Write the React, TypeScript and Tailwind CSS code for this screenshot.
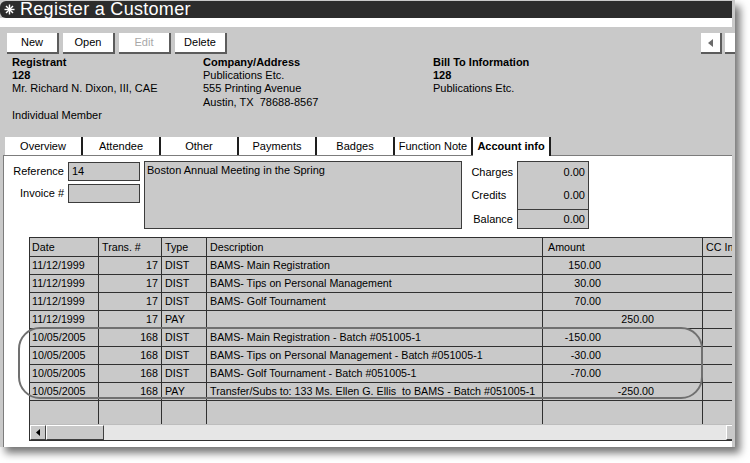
import React from "react";

const rows = [
  { date: "11/12/1999", no: "17", type: "DIST", desc: "BAMS- Main Registration", debit: "150.00", credit: "" },
  { date: "11/12/1999", no: "17", type: "DIST", desc: "BAMS- Tips on Personal Management", debit: "30.00", credit: "" },
  { date: "11/12/1999", no: "17", type: "DIST", desc: "BAMS- Golf Tournament", debit: "70.00", credit: "" },
  { date: "11/12/1999", no: "17", type: "PAY", desc: "", debit: "", credit: "250.00" },
  { date: "10/05/2005", no: "168", type: "DIST", desc: "BAMS- Main Registration - Batch #051005-1", debit: "-150.00", credit: "" },
  { date: "10/05/2005", no: "168", type: "DIST", desc: "BAMS- Tips on Personal Management - Batch #051005-1", debit: "-30.00", credit: "" },
  { date: "10/05/2005", no: "168", type: "DIST", desc: "BAMS- Golf Tournament - Batch #051005-1", debit: "-70.00", credit: "" },
  { date: "10/05/2005", no: "168", type: "PAY", desc: "Transfer/Subs to: 133 Ms. Ellen G. Ellis  to BAMS - Batch #051005-1", debit: "", credit: "-250.00" },
];

const tabs = ["Overview", "Attendee", "Other", "Payments", "Badges", "Function Note", "Account info"];

const cols = "grid grid-cols-[69px_63px_45px_336px_160px_39px]";
const cell = "border-r border-b border-[#303030] flex items-center overflow-hidden whitespace-pre";

function Button({ label, disabled }: { label: string; disabled?: boolean }) {
  return (
    <div
      className={`w-[52px] h-[21px] bg-white border-r-2 border-b-2 border-[#5c5c5c] flex items-center justify-center ${
        disabled ? "text-[#a8a8a8]" : "text-black"
      }`}
    >
      {label}
    </div>
  );
}

export default function App() {
  return (
    <div className="relative w-[750px] h-[463px] bg-white overflow-hidden font-['Liberation_Sans',Arial,sans-serif] text-[11px] text-black">
      <div className="w-[735px] h-[447px] bg-[#c9c9c9] pr-[3px] shadow-[5px_6px_8px_rgba(0,0,0,0.55)] flex flex-col overflow-hidden">
        {/* title */}
        <div className="mt-[1px] h-[17px] bg-[#2c2c2c] rounded-l-[6px] flex items-center pl-[4px] gap-[5px]">
          <svg width="11" height="11" viewBox="0 0 11 11" stroke="white" strokeWidth="1.4">
            <line x1="5.5" y1="0.5" x2="5.5" y2="10.5" />
            <line x1="0.5" y1="5.5" x2="10.5" y2="5.5" />
            <line x1="2" y1="2" x2="9" y2="9" />
            <line x1="9" y1="2" x2="2" y2="9" />
          </svg>
          <span className="text-white text-[18px] leading-[17px] tracking-[0.3px]">Register a Customer</span>
        </div>
        <div className="h-[9px] bg-white" />

        {/* toolbar */}
        <div className="flex items-start justify-between pt-[6px] pl-[7px]">
          <div className="flex gap-[4px]">
            <Button label="New" />
            <Button label="Open" />
            <Button label="Edit" disabled />
            <Button label="Delete" />
          </div>
          <div className="flex gap-[3px] mr-[-14px]">
            <div className="w-[21px] h-[21px] bg-white border-r-2 border-b-2 border-[#5c5c5c] flex items-center justify-center">
              <svg width="5" height="8" viewBox="0 0 5 8">
                <polygon points="5,0 0,4 5,8" fill="#6a6a6a" />
              </svg>
            </div>
            <div className="w-[21px] h-[21px] bg-white border-r-2 border-b-2 border-[#5c5c5c]" />
          </div>
        </div>

        {/* header info */}
        <div className="mt-[2px] pl-[12px] flex leading-[13.2px]">
          <div className="w-[191px]">
            <div className="font-bold">Registrant</div>
            <div className="font-bold">128</div>
            <div>Mr. Richard N. Dixon, III, CAE</div>
            <div>&nbsp;</div>
            <div>Individual Member</div>
          </div>
          <div className="w-[230px]">
            <div className="font-bold">Company/Address</div>
            <div>Publications Etc.</div>
            <div>555 Printing Avenue</div>
            <div className="whitespace-pre">Austin, TX  78688-8567</div>
          </div>
          <div>
            <div className="font-bold">Bill To Information</div>
            <div className="font-bold">128</div>
            <div>Publications Etc.</div>
          </div>
        </div>

        {/* tabs */}
        <div className="mt-[15px] pl-[5px] flex items-end">
          {tabs.map((t) => {
            const active = t === "Account info";
            return (
              <div
                key={t}
                className={`w-[78px] bg-white border-r-2 border-[#1e1e1e] flex items-center justify-center ${
                  active ? "h-[19px] -mb-px relative z-10 font-bold pb-px" : "h-[18px]"
                }`}
              >
                {t}
              </div>
            );
          })}
        </div>

        {/* panel */}
        <div className="ml-[3px] flex-1 bg-white border-l border-t border-[#7c7c7c] overflow-hidden flex flex-col">
          <div className="flex pt-[5px] pl-[5px]">
            <div className="flex flex-col gap-[3px] pt-px">
              <div className="flex items-center">
                <span className="w-[59px] text-right pr-[4px]">Reference</span>
                <div className="w-[72px] h-[19px] bg-[#c9c9c9] border border-[#3c3c3c] flex items-center pl-[3px]">14</div>
              </div>
              <div className="flex items-center">
                <span className="w-[59px] text-right pr-[4px]">Invoice #</span>
                <div className="w-[72px] h-[19px] bg-[#c9c9c9] border border-[#3c3c3c]" />
              </div>
            </div>
            <div className="ml-[4px] w-[318px] h-[68px] bg-[#c9c9c9] border border-[#3c3c3c] pl-[2px] pt-[2px] leading-[13px]">
              Boston Annual Meeting in the Spring
            </div>
            <div className="ml-[4px] w-[47px] flex flex-col items-end">
              <div className="h-[48px] flex flex-col">
                <div className="h-[20px] mt-px flex items-center">Charges</div>
                <div className="h-[20px] mt-[3px] flex items-center">Credits</div>
              </div>
              <div className="h-[20px] flex items-center">Balance</div>
            </div>
            <div className="ml-[4px] w-[72px] h-[68px] bg-[#c9c9c9] border border-[#3c3c3c] flex flex-col">
              <div className="h-[47px] flex flex-col items-end pr-[3px]">
                <div className="h-[20px] flex items-center">0.00</div>
                <div className="h-[20px] mt-[3px] flex items-center">0.00</div>
              </div>
              <div className="flex-1 border-t border-[#3c3c3c] flex items-center justify-end pr-[3px]">0.00</div>
            </div>
          </div>

          {/* grid */}
          <div className="mt-[8px] ml-[25px] w-[713px] border-l border-t border-b border-[#303030] bg-[#c9c9c9] text-[10.7px]">
            <div className={cols}>
              <div className={`${cell} h-[19px] pl-[2px]`}>Date</div>
              <div className={`${cell} h-[19px] pl-[3px]`}>Trans. #</div>
              <div className={`${cell} h-[19px] pl-[3px]`}>Type</div>
              <div className={`${cell} h-[19px] pl-[3px]`}>Description</div>
              <div className={`${cell} h-[19px] pl-[5px]`}>Amount</div>
              <div className={`${cell} h-[19px] pl-[3px]`}>CC Info</div>
            </div>
            {rows.map((r, i) => (
              <div key={i} className={cols}>
                <div className={`${cell} h-[18px] pl-[2px]`}>{r.date}</div>
                <div className={`${cell} h-[18px] justify-end pr-[3px]`}>{r.no}</div>
                <div className={`${cell} h-[18px] pl-[3px]`}>{r.type}</div>
                <div className={`${cell} h-[18px] pl-[3px]`}>{r.desc}</div>
                <div className={`${cell} h-[18px]`}>
                  <span className="w-[58px] text-right">{r.debit}</span>
                  <span className="w-[53px] text-right">{r.credit}</span>
                </div>
                <div className={`${cell} h-[18px]`} />
              </div>
            ))}
            <div className={cols}>
              {[0, 1, 2, 3, 4, 5].map((k) => (
                <div key={k} className="h-[23px] border-r border-[#303030]" />
              ))}
            </div>
            {/* horizontal scrollbar */}
            <div className="h-[16px] flex bg-[#e6e6e6] border-t border-[#bdbdbd]">
              <div className="w-[16px] h-[15px] bg-[#c9c9c9] border-t border-l border-white border-r border-b border-r-[#404040] border-b-[#404040] flex items-center justify-center">
                <svg width="4" height="7" viewBox="0 0 4 7">
                  <polygon points="4,0 0,3.5 4,7" fill="black" />
                </svg>
              </div>
              <div className="w-[58px] h-[15px] bg-[#c9c9c9] border-t border-l border-white border-r border-b border-r-[#404040] border-b-[#404040]" />
              <div className="flex-1" />
              <div className="w-[16px] h-[15px] bg-[#c9c9c9] border-t border-l border-white border-r border-b border-r-[#404040] border-b-[#404040] flex items-center justify-center">
                <svg width="4" height="7" viewBox="0 0 4 7">
                  <polygon points="0,0 4,3.5 0,7" fill="black" />
                </svg>
              </div>
            </div>
          </div>
        </div>
      </div>

      {/* highlight annotation */}
      <div className="absolute left-[18px] top-[327px] w-[685px] h-[72px] border-2 border-[#707070] rounded-[22px] pointer-events-none" />
    </div>
  );
}
